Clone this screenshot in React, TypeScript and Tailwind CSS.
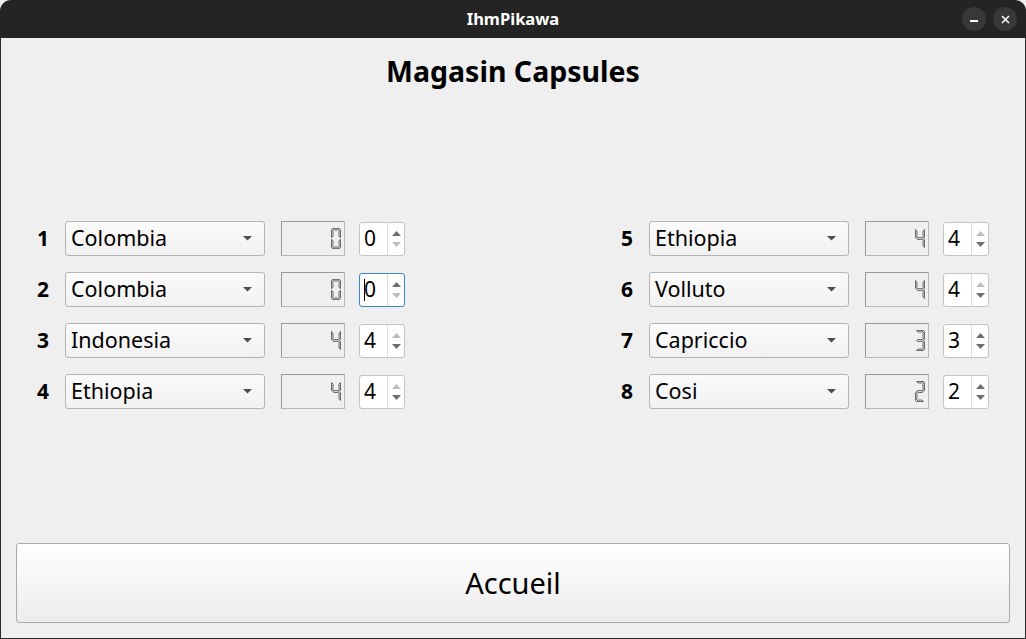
import React from "react";

const FONT = { fontFamily: '"Noto Sans", "Open Sans", sans-serif' };

// segments: a b c d e f g
const DIGITS: Record<string, string> = {
  "0": "abcdef",
  "1": "bc",
  "2": "abged",
  "3": "abgcd",
  "4": "fgbc",
};

const SEGS: Record<string, string> = {
  a: "M1.5 0.5 H8.5 L7 2 H3 Z",
  b: "M9.5 1.5 V9.5 L8 8.5 V3 Z",
  c: "M9.5 11.5 V19.5 L8 18 V12.5 Z",
  d: "M1.5 20.5 H8.5 L7 19 H3 Z",
  e: "M0.5 11.5 V19.5 L2 18 V12.5 Z",
  f: "M0.5 1.5 V9.5 L2 8.5 V3 Z",
  g: "M1.5 10.5 L3 9.5 H7 L8.5 10.5 L7 11.5 H3 Z",
};

const LcdDigit = ({ value }: { value: string }) => (
  <svg width="10" height="21" viewBox="0 0 10 21" className="block">
    {DIGITS[value].split("").map((s) => (
      <path key={s} d={SEGS[s]} fill="#dcdcdc" stroke="#3a3a3a" strokeWidth="0.7" />
    ))}
  </svg>
);

const Combo = ({ label }: { label: string }) => (
  <div className="w-[200px] h-[35px] flex items-center justify-between pl-[5px] pr-[11px] border border-[#b4b4b4] rounded-[3px] bg-gradient-to-b from-[#fbfbfb] to-[#f1f1f1] text-[21.5px] text-black">
    <span>{label}</span>
    <svg width="10" height="5" viewBox="0 0 10 5">
      <path d="M0 0 H9 L4.5 4.5 Z" fill="#4d4d4d" />
    </svg>
  </div>
);

const Lcd = ({ value }: { value: string }) => (
  <div className="w-[64px] h-[35px] flex items-center justify-end pr-[3px] border-t border-l border-[#9a9a9a] border-r border-b border-r-[#b8b8b8] border-b-[#b8b8b8] bg-[#efefef]">
    <LcdDigit value={value} />
  </div>
);

const Spin = ({ value, focused }: { value: number; focused?: boolean }) => {
  const upOn = value < 4;
  const downOn = value > 0;
  return (
    <div
      className={
        "w-[46px] h-[34px] flex bg-white rounded-[3px] border " +
        (focused ? "border-[#3b86c8]" : "border-[#c4c4c4]")
      }
    >
      <div className="flex-1 flex items-center pl-[4px] text-[21px] text-black">
        {focused && <span className="w-[1px] h-[22px] bg-black -mr-[1px]" />}
        {value}
      </div>
      <div className="w-[17px] flex flex-col items-center justify-center gap-[6px] border-l border-[#dcdcdc]">
        <svg width="9" height="5" viewBox="0 0 9 5">
          <path d="M0 5 H9 L4.5 0 Z" fill={upOn ? "#6e6e6e" : "#bdbdbd"} />
        </svg>
        <svg width="9" height="5" viewBox="0 0 9 5">
          <path d="M0 0 H9 L4.5 5 Z" fill={downOn ? "#6e6e6e" : "#bdbdbd"} />
        </svg>
      </div>
    </div>
  );
};

const Row = ({ n, label, value, focused }: { n: number; label: string; value: number; focused?: boolean }) => (
  <div className="flex items-center h-[35px]">
    <div className="w-[12px] text-right text-[21px] font-bold text-black">{n}</div>
    <div className="ml-[16px]">
      <Combo label={label} />
    </div>
    <div className="ml-[16px]">
      <Lcd value={String(value)} />
    </div>
    <div className="ml-[14px]">
      <Spin value={value} focused={focused} />
    </div>
  </div>
);

const left = [
  { n: 1, label: "Colombia", value: 0 },
  { n: 2, label: "Colombia", value: 0, focused: true },
  { n: 3, label: "Indonesia", value: 4 },
  { n: 4, label: "Ethiopia", value: 4 },
];
const right = [
  { n: 5, label: "Ethiopia", value: 4 },
  { n: 6, label: "Volluto", value: 4 },
  { n: 7, label: "Capriccio", value: 3 },
  { n: 8, label: "Cosi", value: 2 },
];

export default function App() {
  return (
    <div className="w-[1026px] h-[639px] flex flex-col bg-[#efefef]" style={FONT}>
      {/* title bar */}
      <div className="h-[38px] bg-[#242424] rounded-t-[11px] grid grid-cols-[1fr_auto_1fr] items-center">
        <div />
        <div className="text-white text-[16.5px] font-bold">IhmPikawa</div>
        <div className="flex justify-end gap-[7px] pr-[9px]">
          <div className="w-[24px] h-[24px] rounded-full bg-[#383838] flex items-center justify-center">
            <div className="w-[8px] h-[1.5px] bg-white mt-[4px]" />
          </div>
          <div className="w-[24px] h-[24px] rounded-full bg-[#383838] flex items-center justify-center">
            <svg width="9" height="9" viewBox="0 0 9 9">
              <path d="M1 1 L8 8 M8 1 L1 8" stroke="white" strokeWidth="1.5" />
            </svg>
          </div>
        </div>
      </div>

      <div className="flex-1 flex flex-col border-x border-b border-[#2b2b2b]">
        <h1 className="pt-[16px] text-center text-[28.5px] leading-[34px] font-bold text-black">Magasin Capsules</h1>

        <div className="mt-[133px] flex pl-[36px]">
          <div className="w-[584px] flex flex-col gap-[16px]">
            {left.map((r) => (
              <Row key={r.n} {...r} />
            ))}
          </div>
          <div className="flex flex-col gap-[16px]">
            {right.map((r) => (
              <Row key={r.n} {...r} />
            ))}
          </div>
        </div>

        <div className="flex-1" />
        <button className="mx-[15px] mb-[15px] h-[80px] rounded-[3px] border border-[#aaaaaa] bg-gradient-to-b from-white to-[#ececec] text-[29px] text-black">
          Accueil
        </button>
      </div>
    </div>
  );
}
